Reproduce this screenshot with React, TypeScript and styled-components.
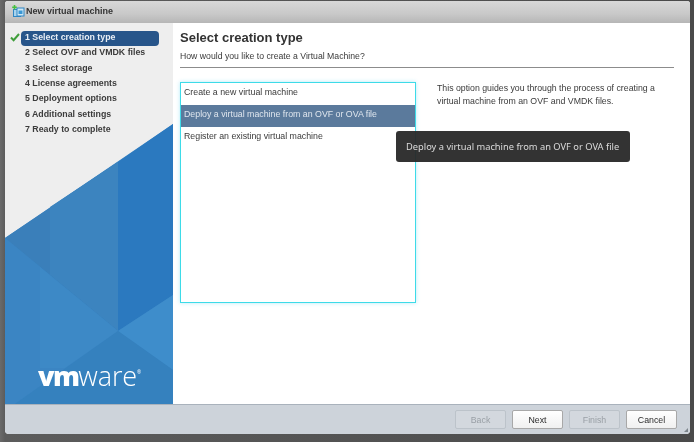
import { createGlobalStyle, styled } from 'styled-components'

const Global = createGlobalStyle`
  html, body {
    margin: 0;
    padding: 0;
    background: #4c4c4c;
  }
`

const Page = styled.div`
  width: 694px;
  height: 442px;
  box-sizing: border-box;
  padding: 1px 4px 8px 5px;
  background: linear-gradient(90deg, #6a6a6a 0, #5c5c5c 5px, #4a4a4a 100%);
  overflow: hidden;
  font-family: 'Liberation Sans', Arial, sans-serif;
`

const Dialog = styled.div`
  height: 100%;
  display: flex;
  flex-direction: column;
  border-radius: 3px 3px 4px 4px;
  overflow: hidden;
  background: #fff;
  position: relative;
  filter: blur(0.3px);
`

const TitleBar = styled.div`
  height: 22px;
  flex: none;
  box-sizing: border-box;
  display: flex;
  align-items: center;
  gap: 1px;
  padding: 0 0 2px 7px;
  background: linear-gradient(180deg, #d8d8d8 0%, #c8c8c8 60%, #b6b6b6 100%);
  color: #333;
  font-size: 9px;
  font-weight: bold;
`

const Body = styled.div`
  flex: 1;
  display: flex;
  min-height: 0;
`

const Sidebar = styled.div`
  width: 168px;
  flex: none;
  position: relative;
  background: #eeeeee;
  padding-top: 8px;
`

const SideArt = styled.svg`
  position: absolute;
  left: 0;
  top: 0;
`

const Steps = styled.ol`
  position: relative;
  list-style: none;
  margin: 0;
  padding: 0 14px 0 16px;
  display: flex;
  flex-direction: column;
`

const Step = styled.li<{ $active?: boolean }>`
  height: 15.33px;
  box-sizing: border-box;
  display: flex;
  align-items: center;
  padding: 0 0 3px 4px;
  border-radius: 4px;
  font-size: 8.8px;
  font-weight: bold;
  white-space: pre;
  color: ${(p) => (p.$active ? '#e8eef5' : '#3c3c3c')};
  background: ${(p) => (p.$active ? '#27558a' : 'transparent')};
`

const Check = styled.svg`
  position: absolute;
  left: 5px;
  top: 10px;
`

const Logo = styled.div`
  position: absolute;
  left: 33px;
  bottom: 15px;
  color: #fff;
  font-size: 27px;
  line-height: 27px;
  font-family: 'Open Sans', sans-serif;
  display: flex;
  align-items: flex-start;
`

const LogoBold = styled.span`
  font-weight: 800;
  letter-spacing: -1.6px;
`

const LogoLight = styled.span`
  font-weight: 300;
  letter-spacing: -0.1px;
`

const LogoMark = styled.span`
  font-size: 5px;
  line-height: 20px;
  letter-spacing: 0;
`

const Content = styled.div`
  flex: 1;
  min-width: 0;
  padding: 6px 16px 0 7px;
  color: #333;
`

const Heading = styled.h1`
  margin: 0;
  font-size: 13px;
  line-height: 17px;
  font-weight: bold;
  color: #333;
`

const Sub = styled.div`
  font-size: 8.7px;
  line-height: 11px;
  margin-top: 5px;
  padding-bottom: 5px;
  border-bottom: 1px solid #8c8c8c;
  color: #3a3a3a;
`

const Columns = styled.div`
  display: flex;
  gap: 21px;
  margin-top: 14px;
`

const List = styled.div`
  width: 236px;
  height: 221px;
  box-sizing: border-box;
  border: 1px solid #3ddbe8;
  box-shadow: 0 0 4px rgba(90, 210, 240, 0.45);
  background: #fff;
  flex: none;
`

const Option = styled.div<{ $selected?: boolean }>`
  height: 22px;
  box-sizing: border-box;
  display: flex;
  align-items: center;
  padding: 0 0 4px 3px;
  font-size: 8.8px;
  color: ${(p) => (p.$selected ? '#dfe6ee' : '#3a3a3a')};
  background: ${(p) => (p.$selected ? '#5b7a9c' : 'transparent')};
`

const Description = styled.p`
  margin: 0;
  width: 225px;
  font-size: 8.75px;
  line-height: 13px;
  color: #3a3a3a;
`

const Tooltip = styled.div`
  position: absolute;
  left: 391px;
  top: 130px;
  width: 234px;
  height: 31px;
  box-sizing: border-box;
  display: flex;
  align-items: center;
  padding-left: 10px;
  border-radius: 3px;
  background: rgba(40, 40, 40, 0.95);
  color: #dcdcdc;
  font-family: 'Noto Sans', sans-serif;
  font-size: 9.3px;
  white-space: nowrap;
`

const Footer = styled.div`
  height: 30px;
  flex: none;
  box-sizing: border-box;
  border-top: 1px solid #a9b2bc;
  background: #cdd3da;
  display: flex;
  justify-content: flex-end;
  align-items: center;
  gap: 6px;
  padding: 0 13px 0 0;
`

const Button = styled.button<{ $disabled?: boolean }>`
  width: 51px;
  height: 19px;
  padding: 0;
  box-sizing: border-box;
  border-radius: 2px;
  border: 1px solid ${(p) => (p.$disabled ? '#bcc3ca' : '#a8a8a8')};
  background: ${(p) => (p.$disabled ? '#d3d8de' : 'linear-gradient(180deg, #ffffff 0%, #f0f0f0 100%)')};
  color: ${(p) => (p.$disabled ? '#9aa0a6' : '#2c2c2c')};
  font-family: 'Liberation Sans', Arial, sans-serif;
  font-size: 8.8px;
`

const Grip = styled.svg`
  position: absolute;
  right: 1px;
  bottom: 1px;
`

const steps = [
  '1 Select creation type',
  '2 Select OVF and VMDK files',
  '3 Select storage',
  '4 License agreements',
  '5 Deployment options',
  '6 Additional settings',
  '7 Ready to complete',
]

const WizardIcon = () => (
  <svg width="13" height="13" viewBox="0 0 13 13">
    <rect x="1.5" y="4.5" width="7" height="7" fill="#a8d4ee" stroke="#2f86c4" />
    <rect x="5" y="3" width="7" height="8" fill="#cfe8f6" stroke="#2f86c4" />
    <rect x="6.5" y="5.5" width="4" height="3.5" fill="#3a97d4" />
    <path d="M2.5 0v4.5M0.2 2.2h4.6" stroke="#46c040" strokeWidth="1.6" />
  </svg>
)

export default function App() {
  return (
    <Page>
      <Global />
      <Dialog>
        <TitleBar>
          <WizardIcon />
          New virtual machine
        </TitleBar>
        <Body>
          <Sidebar>
            <SideArt width="168" height="381" viewBox="0 0 168 381">
              <polygon points="0,215 168,101 168,381 0,381" fill="#3a84c2" />
              <polygon points="0,215 113,139 113,308" fill="#3a7fba" />
              <polygon points="45,184 113,139 113,308 45,252" fill="#3c84bf" />
              <polygon points="113,139 113,308 168,272 168,101" fill="#2b79bf" />
              <polygon points="113,308 168,272 168,347" fill="#3e8dcb" />
              <polygon points="0,215 113,308 10,381 0,381" fill="#3b85c3" />
              <polygon points="35,244 113,308 60,345 35,345" fill="#3d89c6" />
              <polygon points="113,308 168,347 168,381 10,381" fill="#3581be" />
            </SideArt>
            <Check width="10" height="9" viewBox="0 0 10 9">
              <path d="M1 4.5 L3.6 7.2 L9 1" fill="none" stroke="#3f9e3a" strokeWidth="2" />
            </Check>
            <Steps>
              {steps.map((s, i) => (
                <Step key={s} $active={i === 0}>
                  {s}
                </Step>
              ))}
            </Steps>
            <Logo>
              <LogoBold>vm</LogoBold>
              <LogoLight>ware</LogoLight>
              <LogoMark>®</LogoMark>
            </Logo>
          </Sidebar>
          <Content>
            <Heading>Select creation type</Heading>
            <Sub>How would you like to create a Virtual Machine?</Sub>
            <Columns>
              <List>
                <Option>Create a new virtual machine</Option>
                <Option $selected>Deploy a virtual machine from an OVF or OVA file</Option>
                <Option>Register an existing virtual machine</Option>
              </List>
              <Description>
                This option guides you through the process of creating a virtual machine from an OVF and VMDK files.
              </Description>
            </Columns>
          </Content>
        </Body>
        <Footer>
          <Button $disabled>Back</Button>
          <Button>Next</Button>
          <Button $disabled>Finish</Button>
          <Button>Cancel</Button>
        </Footer>
        <Tooltip>Deploy a virtual machine from an OVF or OVA file</Tooltip>
        <Grip width="6" height="6" viewBox="0 0 6 6">
          <path d="M5 1v4H1z" fill="#7d858c" />
        </Grip>
      </Dialog>
    </Page>
  )
}
